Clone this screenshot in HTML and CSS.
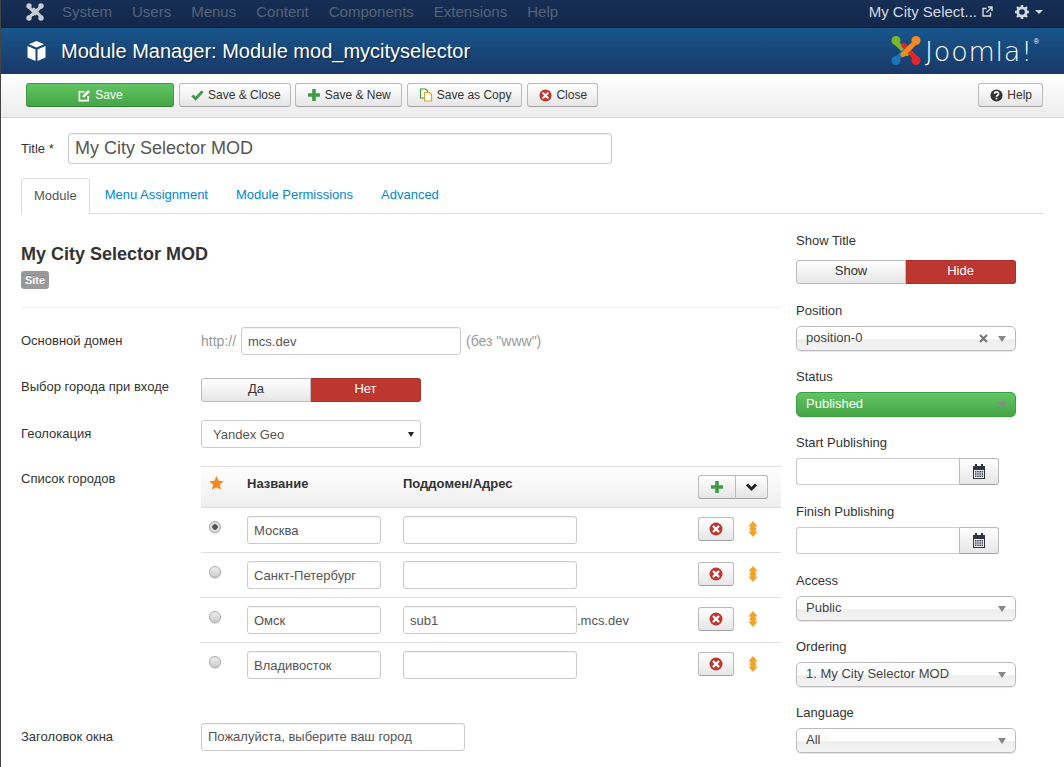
FILE: index.html
```html
<!DOCTYPE html>
<html lang="en">
<head>
    <meta charset="UTF-8">
    <meta name="viewport" content="width=device-width, initial-scale=1.0">
    <title>Module Manager: Module mod_mycityselector</title>
    <link rel="stylesheet" href="styles.css">
</head>
<body>
    <svg class="defs" width="0" height="0">
        <symbol id="i-close" viewBox="0 0 14 14">
            <circle cx="7" cy="7" r="6.5" fill="#bd362f"/>
            <path d="M4.6 4.6l4.8 4.8M9.4 4.6l-4.8 4.8" stroke="#fff" stroke-width="2.2" stroke-linecap="round"/>
        </symbol>
        <symbol id="i-plus" viewBox="0 0 14 14">
            <path d="M7 1v12M1 7h12" stroke="#3f9a45" stroke-width="3.6"/>
        </symbol>
        <symbol id="i-sort" viewBox="0 0 10 16">
            <path d="M5 0l4.700 5.500H7L8.500 8 7 10.500h2.700L5 16 .3 10.500H3L1.500 8 3 5.500H.3z" fill="#f0a428"/>
        </symbol>
        <symbol id="i-cal" viewBox="0 0 14 16">
            <path d="M1 2h12v13H1z" fill="#2d3340"/>
            <path d="M3 0h2v3H3zM9 0h2v3H9z" fill="#2d3340"/>
            <path d="M2 6h10v8H2z" fill="#f4f4f4"/>
            <path d="M3 7h1.500v1.500H3zM5.200 7h1.500v1.500H5.200zM7.400 7h1.500v1.500H7.400zM9.600 7h1.500v1.500H9.600zM3 9.300h1.500v1.500H3zM5.200 9.300h1.500v1.500H5.200zM7.400 9.300h1.500v1.500H7.400zM9.600 9.300h1.500v1.500H9.600zM3 11.600h1.500v1.500H3zM5.200 11.600h1.500v1.500H5.200zM7.400 11.600h1.500v1.500H7.400zM9.600 11.600h1.500v1.500H9.600z" fill="#39404f"/>
        </symbol>
    </svg>

    <nav class="navbar">
        <svg class="nav-logo" width="18" height="18" viewBox="0 0 30 30">
            <g fill="none" stroke="#c6ccd6" stroke-width="5" stroke-linecap="round">
                <path d="M5 7l11 11"/>
                <path d="M25 6L12 19"/>
                <path d="M13 10l12 13"/>
                <path d="M5 24l13-12"/>
            </g>
            <g fill="#c6ccd6">
                <circle cx="5" cy="5" r="4.500"/>
                <circle cx="25" cy="5" r="4.500"/>
                <circle cx="25" cy="25" r="4.500"/>
                <circle cx="5" cy="25" r="4.500"/>
            </g>
        </svg>
        <ul class="nav-menu">
            <li>System</li>
            <li>Users</li>
            <li>Menus</li>
            <li>Content</li>
            <li>Components</li>
            <li>Extensions</li>
            <li>Help</li>
        </ul>
        <div class="nav-right">
            <span>My City Select...</span>
            <svg class="nav-ext" width="11" height="11" viewBox="0 0 11 11">
                <path d="M8.500 6.500V10H1V2.500h3.500" fill="none" stroke="#d5dae2" stroke-width="1.400"/>
                <path d="M4.500 6.500L9 2M6 1h4v4" fill="none" stroke="#d5dae2" stroke-width="1.400"/>
            </svg>
            <svg class="nav-gear" width="14" height="14" viewBox="0 0 14 14">
                <circle cx="7" cy="7" r="4.200" fill="none" stroke="#d5dae2" stroke-width="2.800"/>
                <path d="M7 0v3M7 11v3M0 7h3M11 7h3M2 2l2 2M10 10l2 2M12 2l-2 2M4 10l-2 2" stroke="#d5dae2" stroke-width="2.400"/>
            </svg>
            <span class="caret"></span>
        </div>
    </nav>

    <header class="page-head">
        <svg class="cube" width="19" height="20" viewBox="0 0 19 20">
            <path d="M9.500 0l7.500 3.300-7.500 3.300L2 3.300z" fill="#fff"/>
            <path d="M.5 5l8 3.400V20l-8-3.400z" fill="#fff"/>
            <path d="M18.500 5l-8 3.400V20l8-3.400z" fill="#fff"/>
        </svg>
        <h1>Module Manager: Module mod_mycityselector</h1>
        <div class="brand">
            <svg width="30" height="31" viewBox="0 0 30 30">
                <g fill="none" stroke-width="5" stroke-linecap="round">
                    <path d="M5 7l11 11" stroke="#7ab829"/>
                    <path d="M5 24l13-12" stroke="#1c75bc"/>
                    <path d="M13 10l12 13" stroke="#e4252b"/>
                    <path d="M25 6L12 19" stroke="#f48a20"/>
                </g>
                <circle cx="5" cy="5" r="4.500" fill="#7ab829"/>
                <circle cx="25" cy="5" r="4.500" fill="#f48a20"/>
                <circle cx="25" cy="25" r="4.500" fill="#e4252b"/>
                <circle cx="5" cy="25" r="4.500" fill="#1c75bc"/>
            </svg>
            <span class="brand-name">Joomla!</span><sup class="brand-reg">®</sup>
        </div>
    </header>

    <div class="toolbar">
        <button class="btn btn-save">
            <svg width="13" height="13" viewBox="0 0 14 14">
                <path d="M11 7.500V12.500H1.500V3H7" fill="none" stroke="#fff" stroke-width="1.800"/>
                <path d="M5 7l6-6 2 2-6 6H5z" fill="#fff"/>
            </svg>
            Save
        </button>
        <button class="btn">
            <svg width="13" height="12" viewBox="0 0 14 12">
                <path d="M1.500 6.500l3.500 3.500 7.500-8" fill="none" stroke="#3f9a45" stroke-width="3"/>
            </svg>
            Save &amp; Close
        </button>
        <button class="btn btn-new">
            <svg width="14" height="14"><use href="#i-plus"/></svg>
            Save &amp; New
        </button>
        <button class="btn">
            <svg width="14" height="14" viewBox="0 0 14 14">
                <path d="M1.500 1h5l2 2v7h-7z" fill="#fff" stroke="#3f9a45" stroke-width="1.200"/>
                <path d="M5.500 4.500h5l2 2v6.500h-7z" fill="#fff" stroke="#e0a526" stroke-width="1.200"/>
            </svg>
            Save as Copy
        </button>
        <button class="btn">
            <svg width="13" height="13"><use href="#i-close"/></svg>
            Close
        </button>
        <button class="btn btn-help">
            <svg width="13" height="13" viewBox="0 0 14 14">
                <circle cx="7" cy="7" r="6.500" fill="#333"/>
                <path d="M4.800 5.400c0-3 4.500-3 4.500-.3 0 1.700-2.300 1.600-2.300 3.200" fill="none" stroke="#fff" stroke-width="1.700"/>
                <path d="M6.100 9.400h1.800v1.800H6.100z" fill="#fff"/>
            </svg>
            Help
        </button>
    </div>

    <main class="content">
        <div class="title-row">
            <label class="title-label">Title *</label>
            <input class="title-input" type="text" value="My City Selector MOD">
        </div>

        <ul class="tabs">
            <li class="tab active">Module</li>
            <li class="tab">Menu Assignment</li>
            <li class="tab">Module Permissions</li>
            <li class="tab">Advanced</li>
        </ul>

        <div class="columns">
            <section class="main-col">
                <h2>My City Selector MOD</h2>
                <span class="badge">Site</span>
                <hr>

                <div class="field field-domain">
                    <label>Основной домен</label>
                    <div class="controls">
                        <span class="muted">http://</span>
                        <input class="input domain-input" type="text" value="mcs.dev">
                        <span class="muted">(без "www")</span>
                    </div>
                </div>

                <div class="field field-toggle">
                    <label>Выбор города при входе</label>
                    <div class="toggle toggle-wide">
                        <span class="toggle-off">Да</span>
                        <span class="toggle-on">Нет</span>
                    </div>
                </div>

                <div class="field field-geo">
                    <label>Геолокация</label>
                    <div class="native-select">Yandex Geo<span class="native-arrow"></span></div>
                </div>

                <div class="field field-cities">
                    <label>Список городов</label>
                    <table class="cities">
                        <thead>
                            <tr>
                                <th class="c-radio">
                                    <svg width="15" height="14" viewBox="0 0 16 15">
                                        <path d="M8 0l2.300 5 5.500.6-4.100 3.700 1.200 5.400L8 12 3.100 14.700l1.200-5.400L.2 5.600 5.700 5z" fill="#f48a20"/>
                                    </svg>
                                </th>
                                <th class="c-name">Название</th>
                                <th class="c-addr">Поддомен/Адрес</th>
                                <th class="c-act">
                                    <div class="btn-pair">
                                        <span class="pair-add"><svg width="14" height="14"><use href="#i-plus"/></svg></span>
                                        <span class="pair-more">
                                            <svg width="13" height="9" viewBox="0 0 12 9">
                                                <path d="M1.500 1.500L6 6l4.500-4.500" fill="none" stroke="#222" stroke-width="3"/>
                                            </svg>
                                        </span>
                                    </div>
                                </th>
                            </tr>
                        </thead>
                        <tbody>
                            <tr>
                                <td class="c-radio"><span class="radio checked"></span></td>
                                <td class="c-name"><input class="input name-input" type="text" value="Москва"></td>
                                <td class="c-addr"><input class="input addr-input" type="text"></td>
                                <td class="c-act">
                                    <div class="row-actions">
                                        <span class="btn-del"><svg width="14" height="14"><use href="#i-close"/></svg></span>
                                        <svg class="sort" width="10" height="16"><use href="#i-sort"/></svg>
                                    </div>
                                </td>
                            </tr>
                            <tr>
                                <td class="c-radio"><span class="radio"></span></td>
                                <td class="c-name"><input class="input name-input" type="text" value="Санкт-Петербург"></td>
                                <td class="c-addr"><input class="input addr-input" type="text"></td>
                                <td class="c-act">
                                    <div class="row-actions">
                                        <span class="btn-del"><svg width="14" height="14"><use href="#i-close"/></svg></span>
                                        <svg class="sort" width="10" height="16"><use href="#i-sort"/></svg>
                                    </div>
                                </td>
                            </tr>
                            <tr>
                                <td class="c-radio"><span class="radio"></span></td>
                                <td class="c-name"><input class="input name-input" type="text" value="Омск"></td>
                                <td class="c-addr"><input class="input addr-input" type="text" value="sub1"><span class="suffix">.mcs.dev</span></td>
                                <td class="c-act">
                                    <div class="row-actions">
                                        <span class="btn-del"><svg width="14" height="14"><use href="#i-close"/></svg></span>
                                        <svg class="sort" width="10" height="16"><use href="#i-sort"/></svg>
                                    </div>
                                </td>
                            </tr>
                            <tr>
                                <td class="c-radio"><span class="radio"></span></td>
                                <td class="c-name"><input class="input name-input" type="text" value="Владивосток"></td>
                                <td class="c-addr"><input class="input addr-input" type="text"></td>
                                <td class="c-act">
                                    <div class="row-actions">
                                        <span class="btn-del"><svg width="14" height="14"><use href="#i-close"/></svg></span>
                                        <svg class="sort" width="10" height="16"><use href="#i-sort"/></svg>
                                    </div>
                                </td>
                            </tr>
                        </tbody>
                    </table>
                </div>

                <div class="field field-window">
                    <label>Заголовок окна</label>
                    <input class="input window-input" type="text" value="Пожалуйста, выберите ваш город">
                </div>
            </section>

            <aside class="side-col">
                <div class="side-group side-toggle">
                    <label>Show Title</label>
                    <div class="toggle toggle-side">
                        <span class="toggle-off">Show</span>
                        <span class="toggle-on">Hide</span>
                    </div>
                </div>
                <div class="side-group">
                    <label>Position</label>
                    <div class="chosen">position-0
                        <svg class="chosen-x" width="9" height="9" viewBox="0 0 9 9">
                            <path d="M1 1l7 7M8 1L1 8" stroke="#777" stroke-width="2.200"/>
                        </svg>
                        <span class="chosen-arrow"></span>
                    </div>
                </div>
                <div class="side-group">
                    <label>Status</label>
                    <div class="chosen chosen-green">Published<span class="chosen-arrow"></span></div>
                </div>
                <div class="side-group side-date">
                    <label>Start Publishing</label>
                    <div class="date">
                        <input class="date-input" type="text">
                        <span class="date-btn"><svg width="14" height="16"><use href="#i-cal"/></svg></span>
                    </div>
                </div>
                <div class="side-group side-date">
                    <label>Finish Publishing</label>
                    <div class="date">
                        <input class="date-input" type="text">
                        <span class="date-btn"><svg width="14" height="16"><use href="#i-cal"/></svg></span>
                    </div>
                </div>
                <div class="side-group">
                    <label>Access</label>
                    <div class="chosen">Public<span class="chosen-arrow"></span></div>
                </div>
                <div class="side-group">
                    <label>Ordering</label>
                    <div class="chosen">1. My City Selector MOD<span class="chosen-arrow"></span></div>
                </div>
                <div class="side-group">
                    <label>Language</label>
                    <div class="chosen">All<span class="chosen-arrow"></span></div>
                </div>
            </aside>
        </div>
    </main>
</body>
</html>
```

FILE: styles.css
```css
* {
    box-sizing: border-box;
}
html, body {
    height: 767px;
    overflow: hidden;
}
body {
    margin: 0;
    font-family: "Liberation Sans", Arial, sans-serif;
    font-size: 13px;
    line-height: 18px;
    color: #333;
    background: #fff;
    border-left: 1px solid #444;
}
.defs {
    position: absolute;
}
ul {
    list-style: none;
    margin: 0;
    padding: 0;
}
input {
    font-family: inherit;
    outline: none;
}
svg {
    flex: none;
}

/* top menu */
.navbar {
    height: 28px;
    padding: 0 21px 0 25px;
    display: flex;
    align-items: center;
    background: linear-gradient(#172f55, #12274a);
    border-bottom: 1px solid #0a1a33;
    font-size: 15px;
}
.nav-logo {
    margin-top: -4px;
}
.nav-menu {
    display: flex;
    gap: 20px;
    margin-left: 18px;
    color: #566377;
    margin-top: -4px;
}
.nav-right {
    margin-left: auto;
    display: flex;
    align-items: center;
    color: #d5dae2;
    margin-top: -4px;
}
.nav-ext {
    margin-left: 5px;
}
.nav-gear {
    margin-left: 22px;
}
.caret {
    margin-left: 6px;
    border-top: 4px solid #d5dae2;
    border-left: 4px solid transparent;
    border-right: 4px solid transparent;
}

/* blue title bar */
.page-head {
    height: 46px;
    padding: 0 25px 0 26px;
    display: flex;
    align-items: center;
    background: linear-gradient(#17568c, #1a3867);
}
.page-head h1 {
    margin: 0 0 0 15px;
    font-size: 20px;
    font-weight: 400;
    color: #fff;
    text-shadow: 1px 1px 1px rgba(0, 0, 0, .5);
}
.brand {
    margin-left: auto;
    display: flex;
    align-items: flex-start;
    color: #fff;
}
.brand-name {
    margin-left: 4px;
    font-family: "DejaVu Sans", sans-serif;
    font-weight: 200;
    font-size: 27px;
    line-height: 33px;
    letter-spacing: .8px;
}
.brand-reg {
    margin-left: 1px;
    font-size: 7px;
    line-height: 14px;
}

/* toolbar */
.toolbar {
    height: 44px;
    padding: 9px 21px 0 25px;
    display: flex;
    gap: 5px;
    background: linear-gradient(#fff, #ececec);
    border-bottom: 1px solid #d4d4d4;
}
.btn {
    height: 24px;
    padding: 0 10px 0 11px;
    display: flex;
    align-items: center;
    justify-content: center;
    gap: 4px;
    font-family: inherit;
    font-size: 12px;
    color: #333;
    background: linear-gradient(#fff, #e6e6e6);
    border: 1px solid #bbb;
    border-bottom-color: #a2a2a2;
    border-radius: 3px;
}
.btn:nth-child(2) {
    padding-right: 9px;
}
.btn-new {
    margin-left: -1px;
}
.btn-save {
    width: 148px;
    color: #fff;
    background: linear-gradient(#62c462, #46a546);
    border-color: #3f9a45;
    border-bottom-color: #35803a;
}
.btn-help {
    margin-left: auto;
}

/* form */
.content {
    padding: 15px 21px 0 20px;
}
.title-row {
    display: flex;
    align-items: center;
    height: 31px;
}
.title-label {
    width: 47px;
    color: #333;
}
.title-input {
    width: 544px;
    height: 31px;
    padding: 0 6px;
    font-size: 18px;
    color: #555;
    border: 1px solid #ccc;
    border-radius: 3px;
    box-shadow: inset 0 1px 1px rgba(0, 0, 0, .07);
}
.tabs {
    display: flex;
    margin-top: 14px;
    height: 36px;
    border-bottom: 1px solid #ddd;
}
.tab {
    padding: 8px 14px 0;
    color: #08c;
}
.tab.active {
    height: 36px;
    padding: 8px 12px 0;
    margin-right: 1px;
    color: #555;
    background: #fff;
    border: 1px solid #ddd;
    border-bottom: 0;
    border-radius: 4px 4px 0 0;
}
.columns {
    display: flex;
}
.main-col {
    width: 760px;
    padding-top: 29px;
}
.main-col h2 {
    margin: 0;
    font-size: 18px;
    line-height: 22px;
}
.badge {
    display: block;
    width: 28px;
    height: 18px;
    margin-top: 6px;
    font-size: 11px;
    font-weight: 700;
    line-height: 18px;
    text-align: center;
    color: #fff;
    background: #999;
    border-radius: 3px;
    text-shadow: 0 -1px 0 rgba(0, 0, 0, .25);
}
.main-col hr {
    margin: 18px 0 0;
    border: 0;
    border-top: 1px solid #eee;
}
.field {
    display: flex;
}
.field > label {
    width: 180px;
    flex: none;
}
.field-domain {
    margin-top: 19px;
    align-items: center;
}
.controls {
    display: flex;
    align-items: center;
    color: #999;
    gap: 5px;
}
.muted {
    font-size: 14px;
    color: #999;
}
.input {
    height: 28px;
    padding: 0 6px;
    font-size: 13px;
    color: #555;
    border: 1px solid #ccc;
    border-radius: 3px;
    box-shadow: inset 0 1px 1px rgba(0, 0, 0, .05);
}
.domain-input {
    width: 220px;
}
.field-toggle {
    margin-top: 23px;
}
.toggle {
    display: flex;
    height: 24px;
    line-height: 20px;
    text-align: center;
}
.toggle-wide {
    width: 220px;
}
.toggle-side {
    width: 220px;
    margin-top: 10px;
}
.toggle-off {
    width: 110px;
    color: #333;
    background: linear-gradient(#fff, #e6e6e6);
    border: 1px solid #bbb;
    border-radius: 3px 0 0 3px;
}
.toggle-on {
    width: 110px;
    color: #fff;
    background: #bd362f;
    border: 1px solid #a9302a;
    border-left: 0;
    border-radius: 0 3px 3px 0;
}
.field-geo {
    margin-top: 18px;
    align-items: center;
}
.native-select {
    position: relative;
    width: 220px;
    height: 28px;
    padding-left: 11px;
    line-height: 28px;
    color: #555;
    border: 1px solid #ccc;
    border-radius: 3px;
}
.native-arrow {
    position: absolute;
    right: 6px;
    top: 11px;
    border-top: 5px solid #222;
    border-left: 3px solid transparent;
    border-right: 3px solid transparent;
}
.field-cities {
    margin-top: 18px;
}
.field-cities > label {
    padding-top: 4px;
}
.cities {
    width: 580px;
    border-collapse: collapse;
    table-layout: fixed;
    border-top: 1px solid #ddd;
}
.cities thead tr {
    height: 41px;
    background: linear-gradient(#fff, #eee);
}
.cities th {
    padding: 0;
    text-align: left;
    vertical-align: top;
    padding-top: 8px;
}
.cities tbody tr {
    height: 45px;
    border-top: 1px solid #ddd;
}
.cities td {
    padding: 0;
    vertical-align: middle;
}
.cities th.c-radio {
    padding-top: 9px;
}
.c-radio {
    width: 46px;
    padding-left: 8px !important;
}
.c-name {
    width: 156px;
}
.c-addr {
    width: 295px;
}
.c-act {
    width: 83px;
}
.radio {
    display: block;
    width: 12px;
    height: 12px;
    margin-top: -7px;
    border: 1px solid #aaa;
    border-radius: 50%;
    background: linear-gradient(#eee, #ccc);
    box-shadow: 0 1px 1px rgba(0, 0, 0, .15);
}
.radio.checked {
    background: radial-gradient(circle, #555 0 2.500px, #ddd 3px);
}
.name-input {
    width: 134px;
    display: block;
}
.addr-input {
    width: 174px;
}
.suffix {
    color: #555;
}
.btn-pair {
    display: flex;
    height: 24px;
}
.pair-add, .pair-more {
    display: flex;
    align-items: center;
    justify-content: center;
    height: 24px;
    background: linear-gradient(#fff, #e6e6e6);
    border: 1px solid #bbb;
    border-bottom-color: #a2a2a2;
}
.pair-add {
    width: 38px;
    border-radius: 3px 0 0 3px;
}
.pair-more {
    width: 32px;
    border-left: 0;
    border-radius: 0 3px 3px 0;
}
.row-actions {
    display: flex;
    align-items: center;
    margin-top: -3px;
}
.btn-del {
    display: flex;
    align-items: center;
    justify-content: center;
    width: 36px;
    height: 24px;
    background: linear-gradient(#fff, #e6e6e6);
    border: 1px solid #bbb;
    border-bottom-color: #a2a2a2;
    border-radius: 3px;
}
.sort {
    margin-left: 14px;
}
.field-window {
    margin-top: 35px;
    align-items: center;
}
.window-input {
    width: 264px;
}

/* right column */
.side-col {
    width: 220px;
    margin-left: 15px;
    padding-top: 18px;
}
.side-group {
    margin-bottom: 17px;
}
.side-toggle, .side-date {
    margin-bottom: 18px;
}
.side-group label {
    display: block;
    margin-bottom: 6px;
}
.chosen {
    position: relative;
    height: 25px;
    padding-left: 9px;
    line-height: 21px;
    color: #444;
    background: linear-gradient(#fff 0, #fff 50%, #eee 55%, #f4f4f4);
    border: 1px solid #bbb;
    border-radius: 5px;
    box-shadow: 0 1px 1px rgba(0, 0, 0, .1);
}
.chosen-green {
    color: #fff;
    background: linear-gradient(#62c462, #46a546);
    border-color: #3f9a45;
}
.chosen-arrow {
    position: absolute;
    right: 9px;
    top: 9px;
    border-top: 6px solid #888;
    border-left: 4px solid transparent;
    border-right: 4px solid transparent;
}
.chosen-x {
    position: absolute;
    right: 27px;
    top: 7px;
}
.date {
    display: flex;
    width: 203px;
    height: 27px;
}
.date-input {
    width: 163px;
    height: 27px;
    border: 1px solid #ccc;
    border-right: 0;
    border-radius: 3px 0 0 3px;
}
.date-btn {
    width: 40px;
    display: flex;
    align-items: center;
    justify-content: center;
    background: linear-gradient(#fff, #e6e6e6);
    border: 1px solid #bbb;
    border-bottom-color: #a2a2a2;
    border-radius: 0 3px 3px 0;
}
```
